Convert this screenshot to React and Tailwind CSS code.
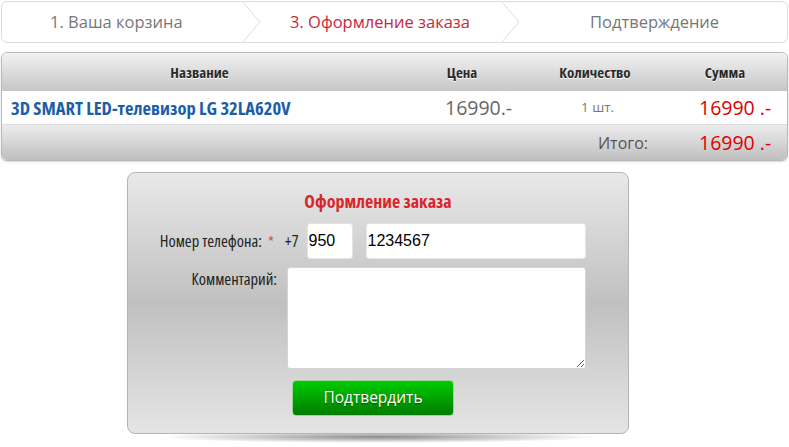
import React from 'react';

const Chevron = () => (
  <svg width="20" height="42" viewBox="0 0 20 42" className="shrink-0">
    <path d="M1 0 L19 21 L1 42" fill="none" stroke="#dadee4" strokeWidth="1" />
  </svg>
);

const Steps = () => (
  <div className="mx-px flex h-[42px] items-center whitespace-nowrap rounded-[6px] border border-[#d9dde2] bg-white text-[16.5px] text-[#777] font-stretch-normal">
    <div className="w-[239px] pl-[48px]">1. Ваша корзина</div>
    <Chevron />
    <div className="w-[239px] pl-[29px] text-[#c8283a]">3. Оформление заказа</div>
    <Chevron />
    <div className="flex-1 pl-[70px]">Подтверждение</div>
  </div>
);

const Cart = () => (
  <div className="mx-px mt-[9px] overflow-hidden whitespace-nowrap rounded-[6px] border border-[#b8b8b8] shadow-[0_1px_2px_rgba(0,0,0,0.15)]">
    <div className="grid h-[38px] grid-cols-[395px_130px_136px_1fr] items-center bg-gradient-to-b from-[#f2f2f2] to-[#c6c6c6] text-[15px] font-bold text-[#2a2a2a] [text-shadow:0_1px_0_#fff]">
      <div className="text-center">Название</div>
      <div className="text-center">Цена</div>
      <div className="text-center">Количество</div>
      <div className="text-center">Сумма</div>
    </div>
    <div className="grid h-[34px] grid-cols-[395px_130px_136px_1fr] items-center border-b border-[#dcdcdc] bg-white">
      <div className="pl-[9px] text-[18.5px] font-bold text-[#1b5ea8]">3D SMART LED-телевизор LG 32LA620V</div>
      <div className="pl-[48px] text-[19.5px] text-[#666] font-stretch-normal">16990.-</div>
      <div className="pl-[54px] text-[13.5px] text-[#777] font-stretch-normal">1 шт.</div>
      <div className="pl-[36px] text-[19.5px] text-[#e00000] font-stretch-normal">16990 .-</div>
    </div>
    <div className="grid h-[35px] grid-cols-[395px_130px_136px_1fr] items-center bg-gradient-to-b from-[#ececec] to-[#bfbfbf]">
      <div></div>
      <div></div>
      <div className="pr-[15px] text-right text-[16px] text-[#555] font-stretch-normal">Итого:</div>
      <div className="pl-[36px] text-[19.5px] text-[#e00000] font-stretch-normal">16990 .-</div>
    </div>
  </div>
);

const OrderForm = () => (
  <div className="relative ml-[127px] mt-[11px] w-[502px]">
    <div className="absolute bottom-[-9px] left-[30px] right-[30px] h-[12px] rounded-[50%] bg-[radial-gradient(ellipse_at_center,rgba(0,0,0,0.45),rgba(0,0,0,0)_70%)]"></div>
    <div className="relative rounded-[8px] border border-[#b4b4b4] bg-gradient-to-b from-[#e9e9e9] via-[#c0c0c0] to-[#e5e5e5] pb-[17px] pt-[15px]">
      <div className="text-center text-[18px] font-bold text-[#d9262d]">Оформление заказа</div>
      <div className="mt-[8px] flex items-center whitespace-nowrap">
        <div className="w-[134px] text-right text-[16.5px] text-[#222]">Номер телефона:</div>
        <span className="ml-[6px] text-[15px] text-[#c0504d]">*</span>
        <span className="ml-[11px] text-[16px] text-[#222]">+7</span>
        <input
          defaultValue="950"
          className="ml-[8px] h-[36px] w-[46px] rounded-[3px] border border-[#e4e4e4] bg-white px-[1px] font-['Liberation_Sans',Arial,sans-serif] text-[16px] text-black outline-none"
        />
        <input
          defaultValue="1234567"
          className="ml-[13px] h-[36px] w-[220px] rounded-[3px] border border-[#e4e4e4] bg-white px-[1px] font-['Liberation_Sans',Arial,sans-serif] text-[16px] text-black outline-none"
        />
      </div>
      <div className="mt-[8px] flex items-start">
        <div className="w-[149px] text-right text-[16.5px] text-[#222]">Комментарий:</div>
        <textarea className="ml-[10px] h-[102px] w-[299px] resize rounded-[3px] border border-[#d4d4d4] bg-white outline-none"></textarea>
      </div>
      <div className="mt-[11px] pl-[164px]">
        <button className="h-[36px] w-[162px] rounded-[4px] border border-[#9ad29a] bg-gradient-to-b from-[#00cc00] to-[#007d00] text-[15.5px] text-white font-stretch-normal [text-shadow:0_1px_1px_rgba(0,0,0,0.45)]">
          Подтвердить
        </button>
      </div>
    </div>
  </div>
);

export default function App() {
  return (
    <div className="h-[447px] w-[789px] overflow-hidden bg-white pt-px font-['Open_Sans',sans-serif] font-stretch-condensed">
      <Steps />
      <Cart />
      <OrderForm />
    </div>
  );
}
